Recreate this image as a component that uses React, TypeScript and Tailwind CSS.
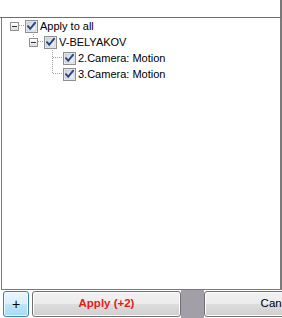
import React from "react";

type Node = {
  label: string;
  level: number;
  expandable?: boolean;
};

const nodes: Node[] = [
  { label: "Apply to all", level: 0, expandable: true },
  { label: "V-BELYAKOV", level: 1, expandable: true },
  { label: "2.Camera: Motion", level: 2 },
  { label: "3.Camera: Motion", level: 2 },
];

function Checkbox() {
  return (
    <svg width="13" height="13" viewBox="0 0 13 13" className="shrink-0">
      <defs>
        <linearGradient id="cbfill" x1="0" y1="0" x2="1" y2="1">
          <stop offset="0" stopColor="#cfd3d8" />
          <stop offset="1" stopColor="#f7f7f7" />
        </linearGradient>
      </defs>
      <rect x="0.5" y="0.5" width="12" height="12" fill="#f4f4f4" stroke="#8e8f8f" />
      <rect x="2" y="2" width="9" height="9" fill="url(#cbfill)" stroke="#b8bcc2" strokeWidth="0.6" />
      <path d="M3 6.2 L5.2 8.8 L10 2.8" fill="none" stroke="#25468a" strokeWidth="2" strokeLinecap="round" />
    </svg>
  );
}

function ExpandBox() {
  return (
    <div className="flex h-[9px] w-[9px] shrink-0 items-center justify-center border border-[#919191] bg-[linear-gradient(to_bottom,#ffffff,#dcdcdc)]">
      <div className="h-px w-[5px] bg-[#333333]" />
    </div>
  );
}

function TreeLines() {
  const dot = { stroke: "#a0a0a0", strokeDasharray: "1 1", shapeRendering: "crispEdges" as const };
  return (
    <svg className="pointer-events-none absolute left-0 top-0" width="282" height="100">
      <line x1="19" y1="25.5" x2="24" y2="25.5" {...dot} />
      <line x1="33.5" y1="32" x2="33.5" y2="37" {...dot} />
      <line x1="38" y1="41.5" x2="43" y2="41.5" {...dot} />
      <line x1="52.5" y1="48" x2="52.5" y2="74" {...dot} />
      <line x1="53" y1="57.5" x2="62" y2="57.5" {...dot} />
      <line x1="53" y1="73.5" x2="62" y2="73.5" {...dot} />
    </svg>
  );
}

const greyButton =
  "h-[26px] w-[149px] shrink-0 rounded-[3px] border border-[#707070] bg-[linear-gradient(to_bottom,#f2f2f2_0%,#ebebeb_50%,#dddddd_50%,#cfcfcf_100%)] shadow-[inset_0_0_0_1px_#fcfcfc]";

export default function App() {
  return (
    <div className="relative flex h-[318px] w-[282px] flex-col overflow-hidden bg-white font-['Liberation_Sans',Arial,sans-serif] text-[11px] text-black">
      <div className="h-[18px] shrink-0 border-b border-r-2 border-[#6e6e6e] border-r-[#787878]" />

      <div className="ml-px h-[272px] shrink-0 border-b border-l border-r-2 border-[#7a7a7a] bg-white">
        <div className="flex flex-col">
          {nodes.map((node) => (
            <div
              key={node.label}
              className="flex h-[16px] items-center"
              style={{ paddingLeft: 9 + node.level * 19 - 1 }}
            >
              <div className="flex w-[15px] shrink-0 items-center">
                {node.expandable ? <ExpandBox /> : null}
              </div>
              <Checkbox />
              <span className="ml-[2px] whitespace-nowrap leading-none">{node.label}</span>
            </div>
          ))}
        </div>
      </div>

      <div className="flex h-[28px] w-[400px] shrink-0 items-stretch bg-white pt-px">
        <button
          type="button"
          className="ml-[3px] h-[26px] w-[26px] shrink-0 rounded-[3px] border border-[#3c7fb1] bg-[linear-gradient(to_bottom,#eaf6fd_0%,#d9f0fc_50%,#bee6fd_50%,#a7d9f5_100%)] text-[14px] leading-none text-black shadow-[inset_0_0_0_1px_#f4fbff]"
        >
          +
        </button>
        <button type="button" className={`ml-[3px] text-[11.5px] font-bold text-[#e81818] ${greyButton}`}>
          Apply (+2)
        </button>
        <div className="-mt-px w-[23px] shrink-0 bg-[#a29fa9]" />
        <button type="button" className={`text-[11.5px] text-black ${greyButton}`}>
          Cancel
        </button>
      </div>

      <TreeLines />
    </div>
  );
}
